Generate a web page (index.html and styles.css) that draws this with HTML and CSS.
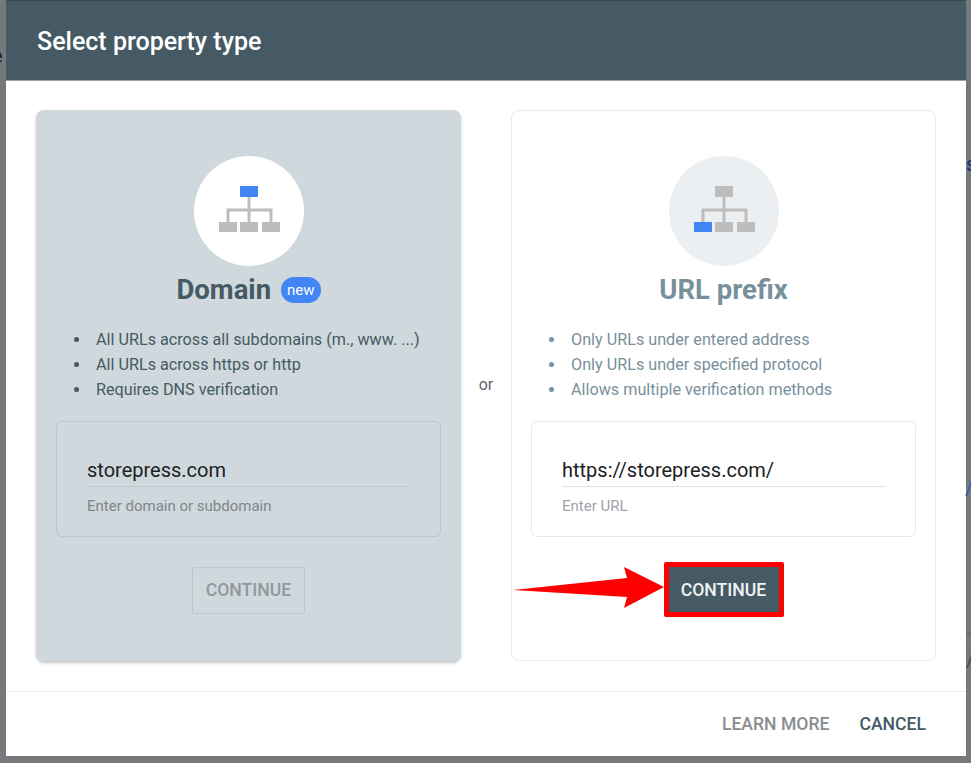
FILE: index.html
```html
<!DOCTYPE html>
<html lang="en">
<head>
<meta charset="utf-8">
<title>Select property type</title>
<link rel="stylesheet" href="styles.css">
</head>
<body>
<span class="peek peek-e">e</span>
<span class="peek peek-s">s</span>
<span class="peek peek-slash">/</span>
<span class="peek peek-slash2">/</span>
<span class="peek-line peek-line-l"></span>
<span class="peek-line peek-line-r"></span>
<main class="dialog">
  <header class="dialog-head">Select property type</header>
  <section class="dialog-body">
    <article class="card card-active">
      <div class="badge-circle">
        <svg class="tree" width="62" height="47" viewBox="0 0 62 47"><path d="M31 11V37M10 37V25H53V37" fill="none" stroke="#bdbdbd" stroke-width="3"/><rect x="22" y="1" width="18" height="11" fill="#4285f4"/><rect x="1" y="37" width="18" height="10" fill="#bdbdbd"/><rect x="22" y="37" width="18" height="10" fill="#bdbdbd"/><rect x="44" y="37" width="18" height="10" fill="#bdbdbd"/></svg>
      </div>
      <h2 class="card-title"><span>Domain</span><span class="new-pill">new</span></h2>
      <ul class="features">
        <li>All URLs across all subdomains (m., www. ...)</li>
        <li>All URLs across https or http</li>
        <li>Requires DNS verification</li>
      </ul>
      <div class="input-box">
        <div class="input-value">storepress.com</div>
        <div class="input-hint">Enter domain or subdomain</div>
      </div>
      <div class="action"><button class="btn btn-disabled" type="button">CONTINUE</button></div>
    </article>
    <div class="or">or</div>
    <article class="card card-plain">
      <div class="badge-circle">
        <svg class="tree" width="62" height="47" viewBox="0 0 62 47"><path d="M31 11V37M10 37V25H53V37" fill="none" stroke="#bdbdbd" stroke-width="3"/><rect x="22" y="1" width="18" height="11" fill="#bdbdbd"/><rect x="1" y="37" width="18" height="10" fill="#4285f4"/><rect x="22" y="37" width="18" height="10" fill="#bdbdbd"/><rect x="44" y="37" width="18" height="10" fill="#bdbdbd"/></svg>
      </div>
      <h2 class="card-title"><span>URL prefix</span></h2>
      <ul class="features">
        <li>Only URLs under entered address</li>
        <li>Only URLs under specified protocol</li>
        <li>Allows multiple verification methods</li>
      </ul>
      <div class="input-box">
        <div class="input-value">https://storepress.com/</div>
        <div class="input-hint">Enter URL</div>
      </div>
      <div class="action">
        <span class="highlight">
          <svg class="arrow" width="151" height="42" viewBox="0 0 151 42"><path d="M0 23L114 11L111 0L151 20L111 41L114 30Z" fill="#fe0000"/></svg>
          <button class="btn btn-primary" type="button">CONTINUE</button>
        </span>
      </div>
    </article>
  </section>
  <footer class="dialog-foot">
    <button class="link link-muted" type="button">LEARN MORE</button>
    <button class="link link-strong" type="button">CANCEL</button>
  </footer>
</main>
</body>
</html>
```
FILE: styles.css
```css
* { box-sizing: border-box; }
html, body { margin: 0; height: 100%; }
body {
  position: relative;
  width: 971px;
  height: 763px;
  overflow: hidden;
  background: #77787c;
  font-family: Roboto, "Liberation Sans", sans-serif;
}
.peek { position: absolute; font-size: 20px; line-height: 24px; }
.peek-e { left: -8px; top: 44px; color: #202124; }
.peek-s { left: 966px; top: 152px; color: #173a7a; font-weight: 500; }
.peek-slash { left: 965px; top: 476px; color: #2b5fb0; }
.peek-slash2 { left: 966px; top: 648px; color: #4a4a4a; }
.peek-line { position: absolute; height: 1px; background: #5f6064; }
.peek-line-l { left: 0; top: 92px; width: 6px; background: #6e6f73; }
.peek-line-r { left: 966px; top: 633px; width: 5px; }
.dialog {
  margin-left: 6px;
  width: 960px;
  height: 756px;
  background: #fff;
  display: flex;
  flex-direction: column;
}
.dialog-head {
  height: 81px;
  flex: none;
  padding: 1px 0 0 31px;
  display: flex;
  align-items: center;
  background: #455a64;
  border-top: 1px solid #37474f;
  border-bottom: 1px solid #9aa5ab;
  color: #fff;
  font-size: 25px;
  font-weight: 500;
}
.dialog-body {
  flex: 1;
  padding: 29px 30px 30px;
  display: flex;
  align-items: stretch;
}
.card {
  width: 425px;
  height: 551px;
  flex: none;
  border-radius: 8px;
  display: flex;
  flex-direction: column;
  align-items: center;
  padding-top: 46px;
}
.card-active {
  background: #cfd8dc;
  box-shadow: 0 2px 3px rgba(60, 64, 67, .3);
}
.card-plain {
  background: #fff;
  border: 1px solid #eaebec;
  padding-top: 45px;
}
.or {
  width: 50px;
  flex: none;
  text-align: center;
  align-self: flex-start;
  margin-top: 265px;
  color: #5f6368;
  font-size: 16px;
  line-height: 20px;
}
.badge-circle {
  width: 110px;
  height: 110px;
  border-radius: 50%;
  display: flex;
  align-items: center;
  justify-content: center;
}
.card-active .badge-circle { background: #fff; }
.card-plain .badge-circle { background: #eceff1; }
.tree { display: block; margin-bottom: 5px; }
.card-title {
  margin: 8px 0 0;
  height: 32px;
  display: flex;
  align-items: center;
  gap: 10px;
  font-size: 27.500px;
  line-height: 32px;
  font-weight: 700;
}
.card-active .card-title { color: #455a64; }
.card-plain .card-title { color: #78909c; }
.new-pill {
  background: #4285f4;
  color: #fff;
  font-size: 15px;
  font-weight: 400;
  line-height: 26px;
  height: 26px;
  padding: 0 6px;
  border-radius: 13px;
}
.features {
  margin: 21px 0 0;
  padding: 0 0 0 60px;
  align-self: stretch;
  list-style: none;
  font-size: 16.200px;
  line-height: 25px;
}
.card-plain .features { padding-left: 59px; }
.card-active .features { color: #455a64; }
.card-plain .features { color: #78909c; }
.features li { position: relative; }
.features li::before {
  content: "";
  position: absolute;
  left: -22px;
  top: 10px;
  width: 5px;
  height: 5px;
  border-radius: 50%;
  background: currentColor;
}
.input-box {
  margin-top: 19px;
  width: 385px;
  height: 116px;
  flex: none;
  border-radius: 6px;
  padding: 34px 30px 0;
}
.card-active .input-box { border: 1px solid #bcc6cb; }
.card-plain .input-box { border: 1px solid #e6e8ea; }
.input-value {
  height: 31px;
  font-size: 20px;
  line-height: 28px;
  color: #202124;
}
.card-active .input-value { border-bottom: 1px solid #bcc6cb; }
.card-plain .input-value { border-bottom: 1px solid #e0e0e0; }
.input-hint {
  margin-top: 10px;
  font-size: 15px;
  line-height: 18px;
}
.card-active .input-hint { color: #80868b; }
.card-plain .input-hint { color: #a0a4a8; }
.action {
  margin-top: 30px;
  height: 47px;
  display: flex;
  align-items: center;
  justify-content: center;
}
.btn {
  width: 113px;
  height: 47px;
  padding: 0 0 2px;
  border-radius: 2px;
  font-family: inherit;
  font-size: 17.600px;
  font-weight: 500;
}
.btn-disabled {
  background: transparent;
  border: 1px solid #bcc6cb;
  color: #90989d;
}
.btn-primary {
  width: 110px;
  height: 45px;
  padding: 0;
  background: #455a64;
  border: 0;
  border-radius: 0;
  color: #f1f3f4;
  display: block;
}
.highlight {
  position: relative;
  display: block;
  border: 5px solid #fe0000;
  border-radius: 2px;
  margin: -4px 0 -2px;
}
.arrow {
  position: absolute;
  right: calc(100% + 5px);
  top: 0;
}
.dialog-foot {
  flex: none;
  height: 66px;
  border-top: 1px solid #eeeeee;
  display: flex;
  align-items: center;
  justify-content: flex-end;
  gap: 30px;
  padding-right: 40px;
  padding-bottom: 2px;
}
.link {
  background: none;
  border: 0;
  padding: 0;
  font-family: inherit;
  font-size: 17.600px;
  font-weight: 500;
}
.link-muted { color: #8a8d90; }
.link-strong { color: #455a64; }
```
